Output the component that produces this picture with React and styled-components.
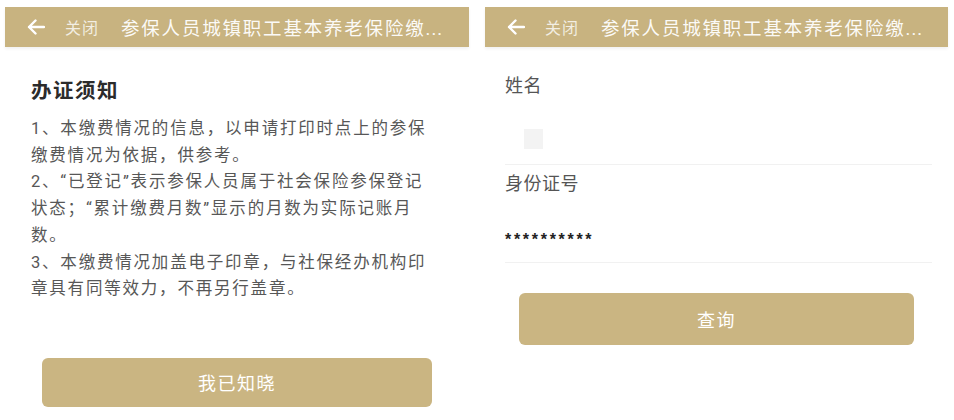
import React from "react";
import styled, { createGlobalStyle } from "styled-components";

const GlobalStyle = createGlobalStyle`
  html, body {
    margin: 0;
    padding: 0;
    background: #fff;
  }
  body {
    font-family: Roboto, "Noto Sans CJK SC", sans-serif;
  }
`;

const Page = styled.div`
  display: flex;
  gap: 16px;
  padding: 7px 6px 0 5px;
  width: 954px;
  height: 420px;
  box-sizing: border-box;
  overflow: hidden;
`;

const Screen = styled.div`
  width: ${(p) => p.$width}px;
  display: flex;
  flex-direction: column;
`;

const Header = styled.div`
  height: 40px;
  background: #c8b380;
  display: flex;
  align-items: center;
  padding-left: 22px;
  box-shadow: 0 2px 3px rgba(0, 0, 0, 0.06);
  color: #fff;
  white-space: nowrap;
  overflow: hidden;
`;

const Back = styled.svg`
  width: 18px;
  height: 16px;
  flex: none;
`;

const Close = styled.span`
  margin-left: 20px;
  font-size: 16px;
  letter-spacing: 1px;
  color: rgba(255, 255, 255, 0.78);
`;

const Title = styled.span`
  margin-left: 22px;
  font-size: 18.5px;
  letter-spacing: 1.8px;
  color: rgba(255, 255, 255, 0.95);
`;

const Dots = styled.span`
  letter-spacing: 1px;
`;

const Notice = styled.div`
  padding: 30px 33px 0 26px;
`;

const NoticeTitle = styled.h2`
  margin: 0 0 11px;
  font-size: 20.5px;
  line-height: 28px;
  font-weight: 700;
  letter-spacing: 1.5px;
  color: #2b2b2b;
`;

const NoticeText = styled.p`
  margin: 0;
  font-size: 16.5px;
  line-height: 26.7px;
  letter-spacing: 1.8px;
  color: #575757;
`;

const Button = styled.button`
  display: block;
  align-self: center;
  width: ${(p) => p.$width}px;
  height: ${(p) => p.$height}px;
  margin-top: ${(p) => p.$top}px;
  border: none;
  border-radius: 6px;
  background: #cab582;
  color: #fff;
  font-family: Roboto, "Noto Sans CJK SC", sans-serif;
  font-size: 18px;
  letter-spacing: 1.5px;
  padding: 0;
`;

const Form = styled.div`
  padding: 26px 16px 0 20px;
  display: flex;
  flex-direction: column;
`;

const Label = styled.div`
  font-size: 18px;
  line-height: 26px;
  letter-spacing: 0.5px;
  color: #555;
  margin-top: ${(p) => p.$top || 0}px;
`;

const Input = styled.div`
  height: 48px;
  margin-top: 17px;
  border-bottom: 1px solid #f1f1f1;
  display: flex;
  align-items: center;
`;

const Masked = styled.span`
  width: 19px;
  height: 20px;
  margin-left: 19px;
  margin-top: -2px;
  background: #f3f3f3;
`;

const Stars = styled.span`
  font-family: "Liberation Sans", sans-serif;
  font-size: 16px;
  font-weight: 700;
  letter-spacing: 2.7px;
  color: #222;
  margin-top: 4px;
`;

function BackArrow() {
  return (
    <Back viewBox="0 0 18 16">
      <path
        d="M17 8H2M8.5 1.5L2 8l6.5 6.5"
        fill="none"
        stroke="#fff"
        strokeWidth="2.4"
        strokeLinecap="round"
        strokeLinejoin="round"
      />
    </Back>
  );
}

function TopBar() {
  return (
    <Header>
      <BackArrow />
      <Close>关闭</Close>
      <Title>
        参保人员城镇职工基本养老保险缴<Dots>...</Dots>
      </Title>
    </Header>
  );
}

export default function App() {
  return (
    <>
      <GlobalStyle />
      <Page>
        <Screen $width={464}>
          <TopBar />
          <Notice>
            <NoticeTitle>办证须知</NoticeTitle>
            <NoticeText>
              1、本缴费情况的信息，以申请打印时点上的参保缴费情况为依据，供参考。
            </NoticeText>
            <NoticeText>
              2、“已登记”表示参保人员属于社会保险参保登记状态；“累计缴费月数”显示的月数为实际记账月数。
            </NoticeText>
            <NoticeText>
              3、本缴费情况加盖电子印章，与社保经办机构印章具有同等效力，不再另行盖章。
            </NoticeText>
          </Notice>
          <Button $width={390} $height={49} $top={55}>
            我已知晓
          </Button>
        </Screen>
        <Screen $width={463}>
          <TopBar />
          <Form>
            <Label>姓名</Label>
            <Input>
              <Masked />
            </Input>
            <Label $top={6}>身份证号</Label>
            <Input>
              <Stars>**********</Stars>
            </Input>
          </Form>
          <Button $width={395} $height={52} $top={30}>
            查询
          </Button>
        </Screen>
      </Page>
    </>
  );
}
